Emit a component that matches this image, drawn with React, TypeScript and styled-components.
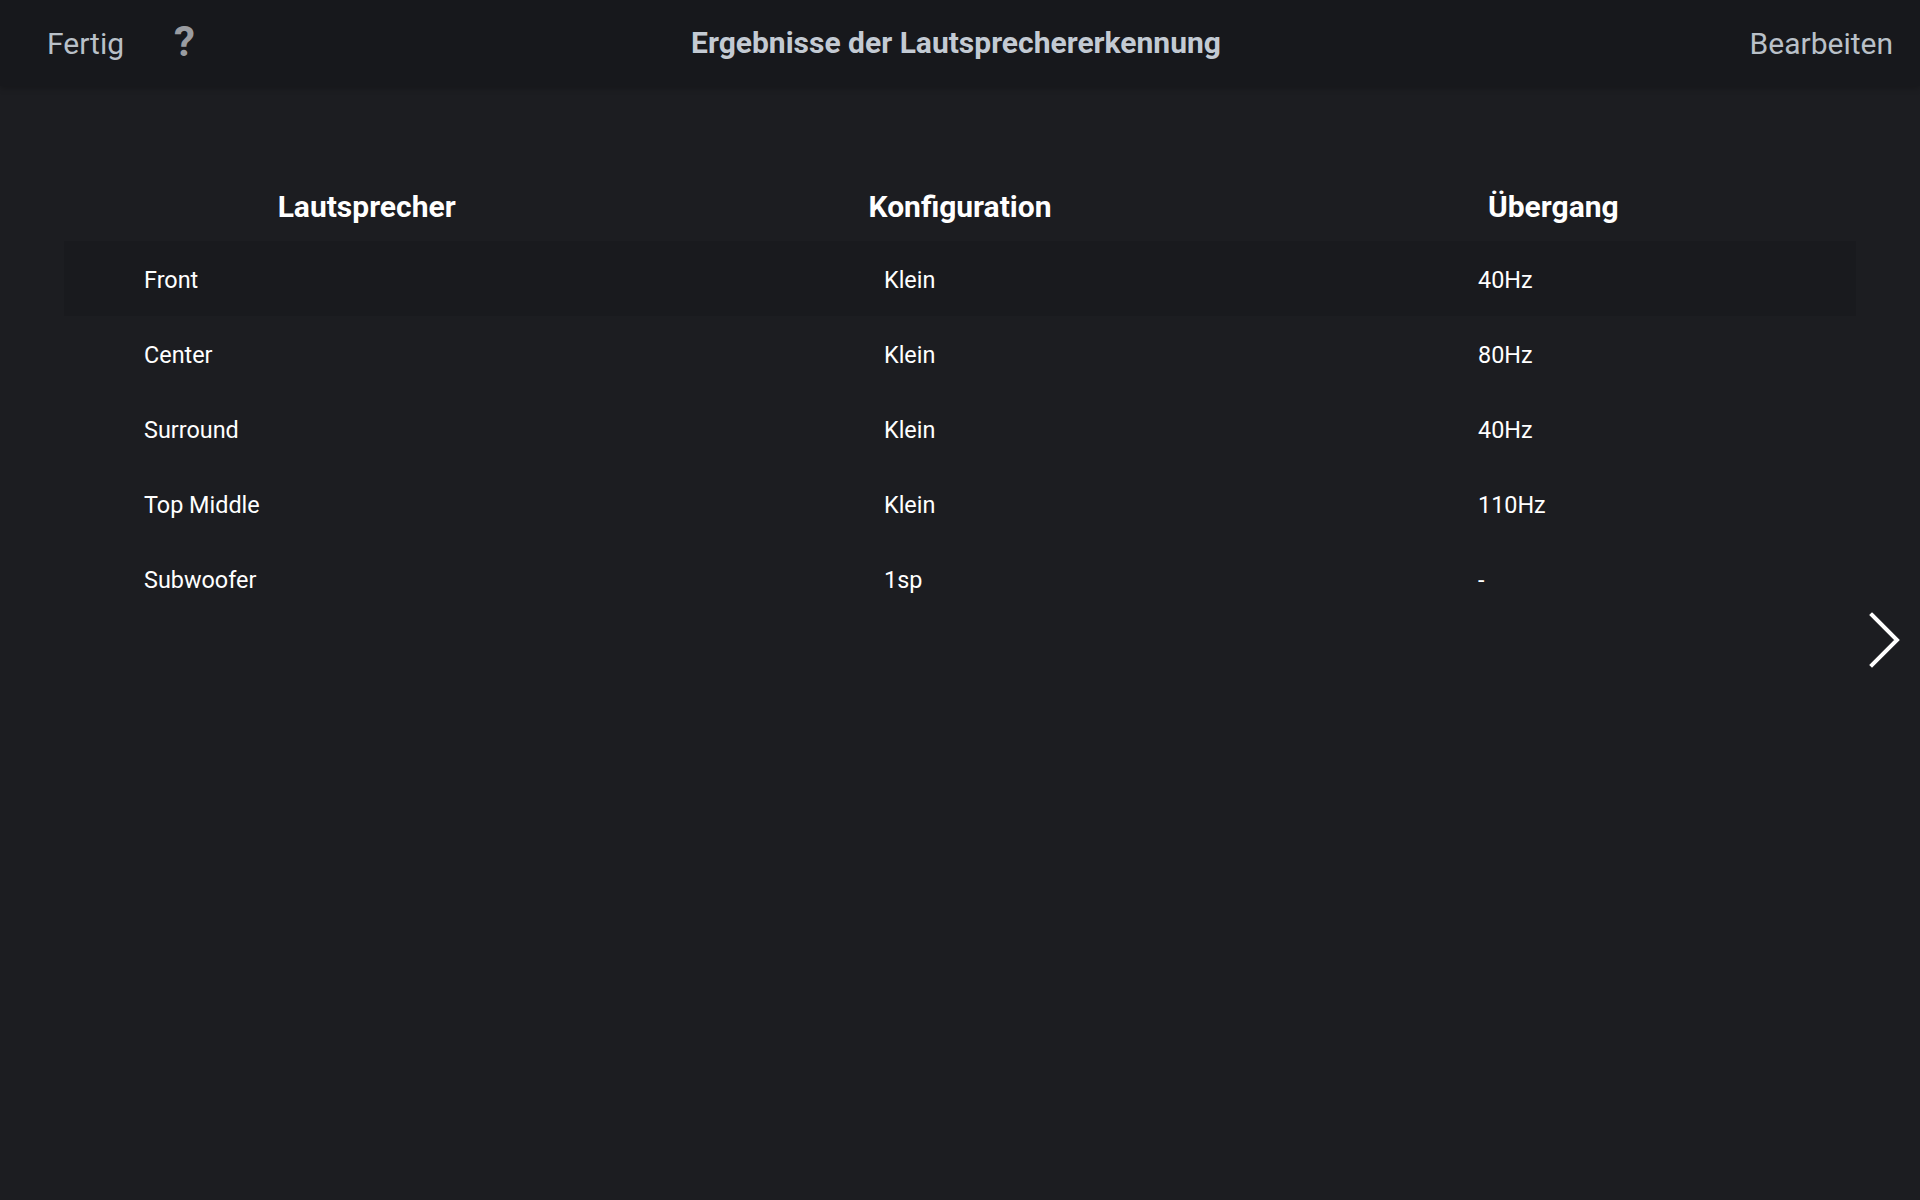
import styled, { createGlobalStyle } from "styled-components";

const GlobalStyle = createGlobalStyle`
    html, body {
        margin: 0;
        padding: 0;
        background: #1c1d21;
    }
    body {
        font-family: Roboto, "Liberation Sans", sans-serif;
        color: #ffffff;
    }
`;

const Page = styled.div`
    position: relative;
    width: 1920px;
    height: 1200px;
    background: #1c1d21;
    overflow: hidden;
`;

const TopBar = styled.header`
    display: grid;
    grid-template-columns: 1fr auto 1fr;
    align-items: center;
    height: 86px;
    padding: 0 27px 0 47px;
    background: #17181c;
    box-shadow: 0 2px 6px rgba(0, 0, 0, 0.25);

    .left {
        display: flex;
        align-items: center;
        gap: 50px;
    }

    .right {
        display: flex;
        justify-content: flex-end;
    }
`;

const BarButton = styled.span`
    font-size: 30px;
    color: #b9c0c8;
    cursor: pointer;
`;

const HelpMark = styled.span`
    font-size: 42px;
    font-weight: 700;
    color: #9a9ca1;
    line-height: 1;
    margin-top: -2px;
`;

const Title = styled.h1`
    margin: -1px 28px 0 0;
    font-size: 30px;
    font-weight: 700;
    color: #c3cad3;
    letter-spacing: 0;
`;

const Results = styled.section`
    padding: 85px 64px 0;
`;

const HeadRow = styled.div`
    display: grid;
    grid-template-columns: repeat(3, 1fr);
    height: 70px;
    margin: 0 6px;
    align-items: center;
`;

const HeadCell = styled.div`
    text-align: center;
    font-size: 30px;
    font-weight: 700;
    color: #ffffff;
`;

const Row = styled.div<{ $selected?: boolean }>`
    display: grid;
    grid-template-columns: 740px 594px 1fr;
    align-items: center;
    height: 75px;
    padding: 3px 0 0 80px;
    box-sizing: border-box;
    background: ${(p) => (p.$selected ? "#191a1e" : "transparent")};
`;

const Cell = styled.div`
    font-size: 23.4px;
    color: #ffffff;
`;

const NextButton = styled.button`
    position: absolute;
    right: 18px;
    top: 612px;
    width: 36px;
    height: 56px;
    padding: 0;
    border: none;
    background: none;
    cursor: pointer;
`;

const speakers = [
    { name: "Front", config: "Klein", crossover: "40Hz" },
    { name: "Center", config: "Klein", crossover: "80Hz" },
    { name: "Surround", config: "Klein", crossover: "40Hz" },
    { name: "Top Middle", config: "Klein", crossover: "110Hz" },
    { name: "Subwoofer", config: "1sp", crossover: "-" },
];

export default function App() {
    return (
        <Page>
            <GlobalStyle />
            <TopBar>
                <div className="left">
                    <BarButton>Fertig</BarButton>
                    <HelpMark>?</HelpMark>
                </div>
                <Title>Ergebnisse der Lautsprechererkennung</Title>
                <div className="right">
                    <BarButton>Bearbeiten</BarButton>
                </div>
            </TopBar>

            <Results>
                <HeadRow>
                    <HeadCell>Lautsprecher</HeadCell>
                    <HeadCell>Konfiguration</HeadCell>
                    <HeadCell>Übergang</HeadCell>
                </HeadRow>
                {speakers.map((s, i) => (
                    <Row key={s.name} $selected={i === 0}>
                        <Cell>{s.name}</Cell>
                        <Cell>{s.config}</Cell>
                        <Cell>{s.crossover}</Cell>
                    </Row>
                ))}
            </Results>

            <NextButton aria-label="Weiter">
                <svg width="36" height="56" viewBox="0 0 36 56">
                    <polyline
                        points="6,3 31,28 6,53"
                        fill="none"
                        stroke="#ffffff"
                        strokeWidth="4"
                        strokeLinecap="square"
                    />
                </svg>
            </NextButton>
        </Page>
    );
}
